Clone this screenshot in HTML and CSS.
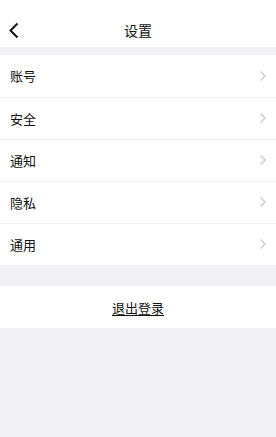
FILE: index.html
```html
<!DOCTYPE html>
<html lang="zh">
<head>
<meta charset="utf-8">
<link rel="stylesheet" href="styles.css">
</head>
<body>
<div class="page">
  <header class="header">
    <svg class="back" width="12" height="17" viewBox="0 0 12 17"><path d="M9.5 1.5 L2.5 8.5 L9.5 15.5" fill="none" stroke="#111" stroke-width="2"/></svg>
    <div class="title">设置</div>
  </header>
  <div class="gap-top"></div>
  <ul class="list">
    <li class="row"><span>账号</span><svg class="chev" width="8" height="12" viewBox="0 0 8 12"><path d="M1.5 1.5 L6 6 L1.5 10.5" fill="none" stroke="#c8c8cd" stroke-width="1.3"/></svg></li>
    <li class="row"><span>安全</span><svg class="chev" width="8" height="12" viewBox="0 0 8 12"><path d="M1.5 1.5 L6 6 L1.5 10.5" fill="none" stroke="#c8c8cd" stroke-width="1.3"/></svg></li>
    <li class="row"><span>通知</span><svg class="chev" width="8" height="12" viewBox="0 0 8 12"><path d="M1.5 1.5 L6 6 L1.5 10.5" fill="none" stroke="#c8c8cd" stroke-width="1.3"/></svg></li>
    <li class="row"><span>隐私</span><svg class="chev" width="8" height="12" viewBox="0 0 8 12"><path d="M1.5 1.5 L6 6 L1.5 10.5" fill="none" stroke="#c8c8cd" stroke-width="1.3"/></svg></li>
    <li class="row"><span>通用</span><svg class="chev" width="8" height="12" viewBox="0 0 8 12"><path d="M1.5 1.5 L6 6 L1.5 10.5" fill="none" stroke="#c8c8cd" stroke-width="1.3"/></svg></li>
  </ul>
  <div class="gap-mid"></div>
  <div class="logout"><span>退出登录</span></div>
</div>
</body>
</html>
```
FILE: styles.css
```css
* { box-sizing: border-box; }
html, body { margin: 0; padding: 0; }
body {
  background: #f2f2f6;
  font-family: "Noto Sans CJK SC", "Noto Sans", sans-serif;
  color: #111;
  width: 276px;
  height: 437px;
}
.page { display: flex; flex-direction: column; }
.header {
  height: 47px;
  padding-top: 13px;
  background: #fff;
  position: relative;
  display: flex;
  align-items: center;
  justify-content: center;
}
.back { position: absolute; left: 8px; top: 22px; }
.title { font-size: 14px; line-height: 32px; color: #111; }
.gap-top { height: 8px; }
.list { list-style: none; margin: 0; padding: 0; background: #fff; }
.row {
  height: 42px;
  display: flex;
  align-items: center;
  justify-content: space-between;
  padding: 0 9px 1px 10px;
  font-size: 13px;
  border-top: 1px solid #f1f1f3;
}
.row:first-child { border-top: none; }
.gap-mid { height: 21px; }
.logout {
  height: 42px;
  background: #fff;
  display: flex;
  align-items: center;
  justify-content: center;
  font-size: 13px;
}
.logout span { text-decoration: underline; text-underline-offset: 2px; }
```
